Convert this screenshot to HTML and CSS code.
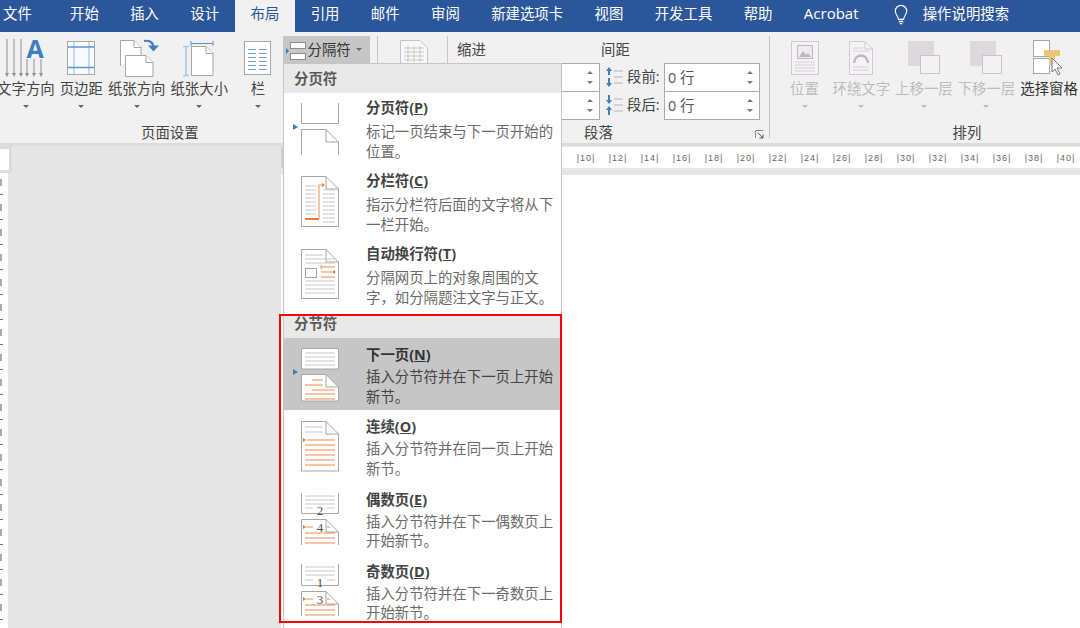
FILE: index.html
```html
<!DOCTYPE html>
<html lang="zh-CN">
<head>
    <meta charset="UTF-8">
    <title>布局 - 分隔符</title>
    <link rel="stylesheet" href="styles.css">
</head>
<body>

    <!-- Tabs -->
    <nav class="tabs">
        <a class="tab tab-file">文件</a>
        <a class="tab">开始</a>
        <a class="tab">插入</a>
        <a class="tab">设计</a>
        <a class="tab active">布局</a>
        <a class="tab">引用</a>
        <a class="tab">邮件</a>
        <a class="tab">审阅</a>
        <a class="tab">新建选项卡</a>
        <a class="tab">视图</a>
        <a class="tab">开发工具</a>
        <a class="tab">帮助</a>
        <a class="tab tab-acrobat">Acrobat</a>
        <svg class="bulb" width="14" height="21" viewBox="0 0 16 24">
            <path d="M5 17.5C5 14 1.5 12.500 1.500 8A6.500 6.500 0 0 1 14.500 8C14.500 12.500 11 14 11 17.500Z" fill="none" stroke="#fff" stroke-width="1.300"/>
            <path d="M5.500 20H10.500M6.500 22.500H9.500" stroke="#fff" stroke-width="1.500"/>
        </svg>
        <a class="tab tab-search">操作说明搜索</a>
    </nav>

    <!-- Ribbon -->
    <section class="ribbon">

        <div class="group group-page">
            <div class="group-body">
                <div class="btn">
                    <svg class="btn-icon" width="44" height="44" viewBox="0 0 44 44">
                        <path class="arrow-line" d="M3 3V39M10 3V39M17 3V39M23 23V39M30 23V39M37 23V39"/>
                        <path class="arrow-head" d="M1 37L3 41L5 37ZM8 37L10 41L12 37ZM15 37L17 41L19 37ZM21 37L23 41L25 37ZM28 37L30 41L32 37ZM35 37L37 41L39 37Z"/>
                        <text class="icon-a" x="31" y="22">A</text>
                    </svg>
                    <span class="btn-label">文字方向</span>
                    <i class="caret"></i>
                </div>
                <div class="btn btn-margin">
                    <svg class="btn-icon" width="44" height="44" viewBox="0 0 44 44">
                        <rect x="8.500" y="5.500" width="27" height="33" fill="#f7fbff" stroke="#a6a6a6"/>
                        <path d="M15 6V38M30 6V38" stroke="#b5cfe8" stroke-width="1.500"/>
                        <path d="M9 11H35M9 31.500H35" stroke="#5b93cf" stroke-width="1.500"/>
                    </svg>
                    <span class="btn-label">页边距</span>
                    <i class="caret"></i>
                </div>
                <div class="btn">
                    <svg class="btn-icon" width="44" height="44" viewBox="0 0 44 44">
                        <path class="page" d="M5.500 30V4.500H19L26 11.500V19"/>
                        <path class="page" d="M19 4.500V11.500H26"/>
                        <path class="page" d="M10.500 19.500H31L38 26.500V40.500H10.500Z"/>
                        <path class="page" d="M31 19.500V26.500H38"/>
                        <path d="M29 5C34 4 38 6 38.500 11" fill="none" stroke="#3f7fc1" stroke-width="2.200"/>
                        <path d="M33 9.500H44L38.500 15.500Z" fill="#3f7fc1"/>
                    </svg>
                    <span class="btn-label">纸张方向</span>
                    <i class="caret"></i>
                </div>
                <div class="btn">
                    <svg class="btn-icon" width="44" height="44" viewBox="0 0 44 44">
                        <path class="page" d="M14.500 10.500H29L36 17.500V39.500H14.500Z"/>
                        <path class="page" d="M29 10.500V17.500H36"/>
                        <path d="M14 7.500H36M14 5V10M36 5V10" stroke="#5b93cf" fill="none"/>
                        <path d="M9 11V39M6 10.500H12M6 39.500H12" stroke="#a9c6e4" stroke-width="1.500" fill="none"/>
                    </svg>
                    <span class="btn-label">纸张大小</span>
                    <i class="caret"></i>
                </div>
                <div class="btn btn-col">
                    <svg class="btn-icon" width="44" height="44" viewBox="0 0 44 44">
                        <rect x="8.500" y="5.500" width="26" height="33" fill="#fff" stroke="#a6a6a6"/>
                        <path d="M12 13.500H20M23 13.500H31M12 17.500H20M23 17.500H31M12 21.500H20M23 21.500H31M12 25.500H20M23 25.500H31M12 29.500H20M23 29.500H31M12 33.500H20M23 33.500H31" stroke="#6c9dd3"/>
                    </svg>
                    <span class="btn-label">栏</span>
                    <i class="caret"></i>
                </div>
                <div class="break-btn">
                    <svg width="20" height="20" viewBox="0 0 20 20">
                        <path d="M0 8L3 11L0 14Z" fill="#3f7fc1"/>
                        <rect x="4.500" y="2.500" width="15" height="6" fill="#fff" stroke="#8c8c8c"/>
                        <rect x="4.500" y="13.500" width="15" height="6" fill="#fff" stroke="#8c8c8c"/>
                    </svg>
                    <span>分隔符</span>
                    <i class="caret"></i>
                </div>
            </div>
            <div class="group-label">页面设置</div>
        </div>

        <div class="group group-draft">
            <svg width="28" height="40" viewBox="0 0 28 40">
                <path d="M.5 39V.5H20L27.500 8V39Z" fill="#f8f8f8" stroke="#b8c6d6"/>
                <path d="M4 8H24M4 12H24M4 16H24M4 20H24M8 6V22M14 6V22M20 6V22" stroke="#c9c9c9"/>
            </svg>
        </div>

        <div class="group group-para">
            <div class="para-grid">
                <div class="para-head">缩进</div>
                <div class="para-head">间距</div>
                <div class="para-cell">
                    <div class="spin spin-indent"><span class="spin-val"></span><span class="spin-arrows"><i></i><i></i></span></div>
                </div>
                <div class="para-cell">
                    <svg class="space-icon" width="20" height="24" viewBox="0 0 20 24">
                        <path d="M5 2L8 6H6V10H4V6H2ZM5 22L8 18H6V13H4V18H2Z" fill="#3f7fc1"/>
                        <path d="M10 6H19M10 12H19M10 18H19" stroke="#b5b5b5"/>
                    </svg>
                    <span class="spin-name">段前:</span>
                    <div class="spin"><span class="spin-val">0 行</span><span class="spin-arrows"><i></i><i></i></span></div>
                </div>
                <div class="para-cell">
                    <div class="spin spin-indent"><span class="spin-val"></span><span class="spin-arrows"><i></i><i></i></span></div>
                </div>
                <div class="para-cell">
                    <svg class="space-icon" width="20" height="24" viewBox="0 0 20 24">
                        <path d="M5 11L8 7H6V2H4V7H2ZM5 13L8 17H6V22H4V17H2Z" fill="#3f7fc1"/>
                        <path d="M10 6H19M10 12H19M10 18H19" stroke="#b5b5b5"/>
                    </svg>
                    <span class="spin-name">段后:</span>
                    <div class="spin"><span class="spin-val">0 行</span><span class="spin-arrows"><i></i><i></i></span></div>
                </div>
            </div>
            <div class="para-foot">
                <span>段落</span>
                <svg class="launcher" width="9" height="9" viewBox="0 0 9 9">
                    <path d="M.5 8V.5H8.500" fill="none" stroke="#8c8c8c"/>
                    <path d="M3 3L8 8M8 4.500V8H4.500" fill="none" stroke="#555"/>
                </svg>
            </div>
        </div>

        <div class="group group-arrange">
            <div class="group-body">
                <div class="btn btn-pos disabled">
                    <svg class="btn-icon" width="44" height="44" viewBox="0 0 44 44">
                        <rect x="8.500" y="5.500" width="27" height="33" fill="#f5f2f5" stroke="#cfcacf"/>
                        <rect x="14.500" y="9.500" width="15" height="13" fill="#eeeaee" stroke="#bdb8bd"/>
                        <path d="M16 21L20 15L23 19L25 17L28 21Z" fill="#bdb8bd"/>
                        <path d="M12 26H32M12 29H32M12 32H32M12 35H32" stroke="#d5d0d5"/>
                    </svg>
                    <span class="btn-label">位置</span>
                    <i class="caret"></i>
                </div>
                <div class="btn disabled">
                    <svg class="btn-icon" width="44" height="44" viewBox="0 0 44 44">
                        <path d="M10.500 38.500V5.500H26L33.500 13V38.500Z" fill="#f5f2f5" stroke="#cfcacf"/>
                        <path d="M26 5.500V13H33.500" fill="none" stroke="#cfcacf"/>
                        <path d="M14 12H24M14 15H30M14 31H30M14 34H30" stroke="#d5d0d5"/>
                        <path d="M15 27C16 17 28 17 29 27" fill="none" stroke="#bdb8bd" stroke-width="2.500"/>
                    </svg>
                    <span class="btn-label">环绕文字</span>
                    <i class="caret"></i>
                </div>
                <div class="btn disabled">
                    <svg class="btn-icon" width="44" height="44" viewBox="0 0 44 44">
                        <rect x="6" y="5" width="26" height="25" fill="#dcd8dc"/>
                        <rect x="18.500" y="19.500" width="19" height="18" fill="#f5f2f5" stroke="#c8c4c8"/>
                    </svg>
                    <span class="btn-label">上移一层</span>
                    <i class="caret"></i>
                </div>
                <div class="btn disabled">
                    <svg class="btn-icon" width="44" height="44" viewBox="0 0 44 44">
                        <rect x="6" y="5" width="26" height="25" fill="#dcd8dc"/>
                        <rect x="18.500" y="19.500" width="19" height="18" fill="#f5f2f5" stroke="#c8c4c8"/>
                    </svg>
                    <span class="btn-label">下移一层</span>
                    <i class="caret"></i>
                </div>
                <div class="btn">
                    <svg class="btn-icon" width="44" height="44" viewBox="0 0 44 44">
                        <rect x="6.500" y="4.500" width="16" height="16" fill="#fff" stroke="#a6a6a6"/>
                        <rect x="6.500" y="22.500" width="16" height="15" fill="#fff" stroke="#a6a6a6"/>
                        <path d="M17 14H33V20H28V29H22V20H17Z" fill="#efc678"/>
                        <path d="M25 22V36L28 33L31 39L33 38L30 32H35Z" fill="#fff" stroke="#777"/>
                    </svg>
                    <span class="btn-label label-dark">选择窗格</span>
                </div>
            </div>
            <div class="group-label">排列</div>
        </div>
    </section>

    <!-- Document area -->
    <main class="workspace">
        <div class="left-pane">
            <div class="corner"></div>
            <div class="v-ruler"></div>
        </div>
        <div class="right-pane">
            <div class="h-ruler">
                <span>|10|</span><span>|12|</span><span>|14|</span><span>|16|</span>
                <span>|18|</span><span>|20|</span><span>|22|</span><span>|24|</span>
                <span>|26|</span><span>|28|</span><span>|30|</span><span>|32|</span>
                <span>|34|</span><span>|36|</span><span>|38|</span><span>|40|</span>
            </div>
            <div class="sheet"></div>
        </div>
    </main>

    <!-- Breaks menu -->
    <div class="menu">
        <div class="menu-head">分页符</div>

        <div class="item">
            <svg class="item-icon" width="50" height="70" viewBox="0 0 50 70">
                <path d="M3 31L8 34L3 37Z" fill="#3f7fc1"/>
                <path class="outline" d="M11.500 10V30.500H48.500V10"/>
                <path class="outline" d="M11.500 62V36.500H36L48.500 49V62"/>
                <path class="outline" d="M36 36.500V49H48.500"/>
            </svg>
            <div class="item-text">
                <div class="item-title">分页符(<u>P</u>)</div>
                <div class="item-desc">标记一页结束与下一页开始的位置。</div>
            </div>
        </div>

        <div class="item">
            <svg class="item-icon" width="50" height="70" viewBox="0 0 50 70">
                <path class="outline" d="M11.500 60.500V10.500H36L48.500 23V60.500Z"/>
                <path class="outline" d="M36 10.500V23H48.500"/>
                <path class="gray" d="M15 20H26M15 24H26M15 28H26M15 32H26M15 36H26M15 40H26M15 44H26M15 48H26M33 24H45M33 28H45M33 32H45M33 36H45M33 40H45M33 44H45M33 48H45M33 52H45M33 56H45"/>
                <path class="orange" d="M29 53V19H32"/>
                <path d="M32 17L35 19L32 21Z" fill="#ed7d31"/>
                <path d="M15 53H29" stroke="#ed7d31" stroke-width="2"/>
            </svg>
            <div class="item-text">
                <div class="item-title">分栏符(<u>C</u>)</div>
                <div class="item-desc">指示分栏符后面的文字将从下一栏开始。</div>
            </div>
        </div>

        <div class="item">
            <svg class="item-icon" width="50" height="70" viewBox="0 0 50 70">
                <path class="outline" d="M11.500 59.500V10.500H36L48.500 23V59.500Z"/>
                <path class="outline" d="M36 10.500V23H48.500"/>
                <path class="gray" d="M15 16H33M15 20H45M15 24H45M15 42H45M15 46H45M15 50H45M15 54H45"/>
                <rect x="15.500" y="29.500" width="11" height="9" fill="#fff" stroke="#a6a6a6"/>
                <path class="orange" d="M31 28H45M31 33H42M31 38H45M31 26V30"/>
                <path d="M45 31L42 33L45 35Z" fill="#ed7d31"/>
            </svg>
            <div class="item-text">
                <div class="item-title">自动换行符(<u>T</u>)</div>
                <div class="item-desc">分隔网页上的对象周围的文字，如分隔题注文字与正文。</div>
            </div>
        </div>

        <div class="menu-head menu-head-second">分节符</div>

        <div class="item item-low selected">
            <svg class="item-icon" width="50" height="70" viewBox="0 0 50 70">
                <path d="M3 31L8 34L3 37Z" fill="#3f7fc1"/>
                <path class="outline sheet-fill" d="M11.500 10.500H48.500V31H11.500Z"/>
                <path class="gray" d="M15 15H45M15 19H45M15 23H45M15 27H45"/>
                <path class="outline sheet-fill" d="M11.500 63V36.500H36L48.500 49V63Z"/>
                <path class="outline" d="M36 36.500V49H48.500"/>
                <path class="orange" d="M22 42H33M15 47H33M22 52H45M15 56H45M15 61H45"/>
            </svg>
            <div class="item-text">
                <div class="item-title">下一页(<u>N</u>)</div>
                <div class="item-desc">插入分节符并在下一页上开始新节。</div>
            </div>
        </div>

        <div class="item item-low">
            <svg class="item-icon" width="50" height="70" viewBox="0 0 50 70">
                <path class="outline" d="M11.500 61V11.500H36L48.500 24V61Z"/>
                <path class="outline" d="M36 11.500V24H48.500"/>
                <path class="gray" d="M15 17H33M15 22H33"/>
                <path d="M13 28L16 30L13 32Z" fill="#ed7d31"/>
                <path class="orange" d="M17 30H45M15 35H45M15 40H45M15 45H45M15 50H45M15 55H45"/>
            </svg>
            <div class="item-text">
                <div class="item-title">连续(<u>O</u>)</div>
                <div class="item-desc">插入分节符并在同一页上开始新节。</div>
            </div>
        </div>

        <div class="item item-low">
            <svg class="item-icon" width="50" height="70" viewBox="0 0 50 70">
                <path class="outline" d="M11.500 10V30.500H48.500V10"/>
                <path class="gray" d="M15 13H45M15 17H45M15 21H45M15 25H23M37 25H45"/>
                <text class="page-num" x="30" y="32">2</text>
                <path class="outline" d="M11.500 62V36.500H36L48.500 49V62"/>
                <path class="outline" d="M36 36.500V49H48.500"/>
                <path d="M13 42L16 44L13 46Z" fill="#ed7d31"/>
                <path class="orange" d="M16 44H23M37 44H40M15 50H45M15 55H45M15 60H45"/>
                <text class="page-num" x="30" y="49">4</text>
            </svg>
            <div class="item-text">
                <div class="item-title">偶数页(<u>E</u>)</div>
                <div class="item-desc">插入分节符并在下一偶数页上开始新节。</div>
            </div>
        </div>

        <div class="item item-low">
            <svg class="item-icon" width="50" height="70" viewBox="0 0 50 70">
                <path class="outline" d="M11.500 9V30.500H48.500V9"/>
                <path class="gray" d="M15 12H45M15 16H45M15 20H45M15 25H23M37 25H45"/>
                <text class="page-num" x="30" y="32">1</text>
                <path class="outline" d="M11.500 61V36.500H36L48.500 49V61"/>
                <path class="outline" d="M36 36.500V49H48.500"/>
                <path d="M13 42L16 44L13 46Z" fill="#ed7d31"/>
                <path class="orange" d="M16 44H23M37 44H40M15 50H45M15 55H45M15 60H45"/>
                <text class="page-num" x="30" y="49">3</text>
            </svg>
            <div class="item-text">
                <div class="item-title">奇数页(<u>D</u>)</div>
                <div class="item-desc">插入分节符并在下一奇数页上开始新节。</div>
            </div>
        </div>
    </div>

    <!-- Red annotation box -->
    <div class="annotation"></div>

</body>
</html>
```

FILE: styles.css
```css
/* Global Reset */
* {
    margin: 0;
    padding: 0;
    box-sizing: border-box;
}

html, body {
    height: 628px;
    overflow: hidden;
}

body {
    position: relative;
    display: flex;
    flex-direction: column;
    font-family: "Open Sans", "Noto Sans CJK SC", sans-serif;
    font-size: 14.4px;
    color: #444;
    background-color: #e6e6e6;
}

/* Tabs */
.tabs {
    display: flex;
    align-items: center;
    flex: none;
    height: 32px;
    background-color: #2b579a;
}

.tab {
    padding: 0 15.7px;
    height: 32px;
    line-height: 27px;
    color: #fff;
    white-space: nowrap;
}

.tab-file {
    padding: 0 22.5px 0 3px;
}

.tab.active {
    color: #2b579a;
    background-color: #f1f1f1;
}

.tab-acrobat {
    font-size: 15px;
}

.bulb {
    flex: none;
    margin-left: 20px;
    margin-top: -4px;
}

.tab-search {
    padding-left: 14.5px;
}

/* Ribbon */
.ribbon {
    display: flex;
    flex: none;
    height: 111px;
    padding: 4px 0 5px;
    overflow: hidden;
    background-color: #f1f1f1;
}

.group {
    flex: none;
    height: 102px;
    border-right: 1px solid #c6c6c6;
}

.group-page {
    width: 401px;
    margin-left: -23px;
    padding-left: 17.6px;
}

.group-draft {
    width: 70px;
    padding: 4px 0 0 22px;
}

.group-para {
    width: 322px;
    padding-left: 9px;
}

.group-arrange {
    width: 394px;
    padding-left: 9px;
    border-right: none;
}

.group-body {
    display: flex;
    align-items: flex-start;
    height: 83px;
}

.group-label {
    margin-top: 7px;
    height: 14px;
    line-height: 14px;
    text-align: center;
    color: #444;
    white-space: nowrap;
}

.group-page .group-label {
    padding-right: 32px;
}

.group-arrange .group-label {
    margin-left: -9px;
}

.btn {
    display: flex;
    flex-direction: column;
    align-items: center;
    flex: none;
    width: 62.600px;
}

.btn-margin {
    width: 48.200px;
}

.btn-col {
    width: 55px;
}

.btn-pos {
    width: 51px;
}

.btn-icon {
    display: block;
    overflow: visible;
}

.btn-label {
    height: 18px;
    line-height: 18px;
    white-space: nowrap;
    color: #444;
}

.label-dark {
    color: #333;
}

.disabled .btn-label {
    color: #bcbcbc;
}

.caret {
    display: block;
    margin-top: 7px;
    width: 0;
    height: 0;
    border-left: 3px solid transparent;
    border-right: 3px solid transparent;
    border-top: 3px solid #666;
}

.disabled .caret {
    border-top-color: #bcbcbc;
}

.break-btn {
    display: flex;
    align-items: center;
    flex: none;
    margin-left: -3px;
    width: 87px;
    height: 27px;
    padding-left: 3px;
    background-color: #c6c6c6;
}

.break-btn span {
    margin-left: 2px;
    line-height: 27px;
    color: #333;
}

.break-btn .caret {
    margin: 0 0 0 5px;
}

.arrow-line {
    stroke: #8f8f8f;
    fill: none;
}

.arrow-head {
    fill: #8f8f8f;
}

.icon-a {
    font-family: "Open Sans", sans-serif;
    font-size: 25px;
    font-weight: 700;
    text-anchor: middle;
    fill: #3f7fc1;
}

.page {
    fill: #fff;
    stroke: #a6a6a6;
}

/* Paragraph group */
.para-grid {
    display: grid;
    grid-template-columns: 144px 160px;
    grid-template-rows: 27px 28px 28px;
    height: 83px;
}

.para-head {
    line-height: 27px;
    color: #444;
}

.para-cell {
    display: flex;
    align-items: center;
}

.space-icon {
    flex: none;
    margin-left: 3px;
}

.spin-name {
    margin-left: 3px;
    width: 37px;
    line-height: 20px;
    white-space: nowrap;
    color: #444;
}

.spin {
    display: flex;
    flex: none;
    width: 96px;
    height: 29px;
    margin-bottom: -1px;
    background-color: #fff;
    border: 1px solid #ababab;
}

.spin-indent {
    width: 143px;
}

.spin-val {
    flex: 1;
    padding-left: 3px;
    line-height: 27px;
    color: #555;
}

.spin-arrows {
    display: flex;
    flex-direction: column;
    justify-content: space-around;
    align-items: center;
    width: 19px;
    padding: 4px 0;
}

.spin-arrows i {
    width: 0;
    height: 0;
    border-left: 3px solid transparent;
    border-right: 3px solid transparent;
    border-bottom: 3px solid #777;
}

.spin-arrows i:last-child {
    border-bottom: none;
    border-top: 3px solid #777;
}

.para-foot {
    display: flex;
    align-items: center;
    margin-top: 7px;
    height: 14px;
    padding-left: 127px;
    line-height: 14px;
}

.launcher {
    margin-left: auto;
    margin-right: 5px;
    margin-top: 2px;
}

/* Document area */
.workspace {
    display: flex;
    flex: 1;
    min-height: 0;
    background-color: #e6e6e6;
    border-top: 3px solid #dcdcdc;
}

.left-pane {
    display: flex;
    flex-direction: column;
    flex: none;
    width: 281px;
}

.corner {
    flex: none;
    width: 12px;
    height: 27px;
    background-color: #fff;
    border: 3px solid #dcdcdc;
    border-left: none;
}

.v-ruler {
    flex: 1;
    width: 8px;
    background-color: #fff;
    background-image:
        linear-gradient(#777 0 1px, transparent 1px),
        linear-gradient(#aaa 0 7px, transparent 7px);
    background-size: 3px 25px, 2px 25px;
    background-position: 0 21px, 0 6px;
    background-repeat: repeat-y;
}

.right-pane {
    display: flex;
    flex-direction: column;
    flex: 1;
    padding-top: 1px;
}

.h-ruler {
    display: flex;
    align-items: center;
    flex: none;
    height: 21px;
    padding-left: 287px;
    background-color: #fff;
    border-left: 2px solid #cfcfcf;
}

.h-ruler span {
    flex: none;
    width: 32px;
    text-align: center;
    font-family: "Liberation Sans", sans-serif;
    font-size: 9px;
    letter-spacing: 1px;
    color: #666;
}

.sheet {
    flex: 1;
    margin-top: 7px;
    background-color: #fff;
}

/* Breaks menu */
.menu {
    position: absolute;
    left: 283px;
    top: 63px;
    width: 279px;
    height: 565px;
    overflow: hidden;
    background-color: #fff;
    border: 1px solid #c6c6c6;
    border-bottom: none;
}

.menu-head {
    height: 29px;
    padding-left: 10px;
    line-height: 29px;
    font-weight: 700;
    color: #5a5a5a;
    background-color: #e9e9e9;
}

.menu-head-second {
    margin-top: 2px;
    height: 24px;
    line-height: 19px;
}

.item {
    display: flex;
    align-items: flex-start;
    height: 73px;
    padding-top: 4px;
    overflow: hidden;
}

.item-low {
    height: 72.300px;
    padding-top: 6px;
}

.item.selected {
    background-color: #c6c6c6;
}

.item-icon {
    flex: none;
    margin: -4px 26px 0 6px;
}

.item-low .item-icon {
    margin-top: -6px;
}

.item-text {
    width: 190px;
}

.item-title {
    height: 22px;
    line-height: 22px;
    font-weight: 700;
    color: #444;
    white-space: nowrap;
}

.item-desc {
    margin-top: 3px;
    line-height: 19.6px;
    color: #6a6a6a;
}

.item-low .item-desc {
    margin-top: 1px;
}

.selected .item-title {
    color: #333;
}

.selected .item-desc {
    color: #444;
}

.outline {
    fill: none;
    stroke: #a6a6a6;
}

.sheet-fill {
    fill: #fff;
}

.gray {
    stroke: #c8c8c8;
    fill: none;
}

.orange {
    stroke: #ee8a4c;
    fill: none;
}

.page-num {
    font-family: "Liberation Serif", serif;
    font-size: 13px;
    text-anchor: middle;
    fill: #555;
}

/* Red annotation */
.annotation {
    position: absolute;
    left: 279px;
    top: 314px;
    width: 283px;
    height: 309px;
    border: 2px solid #f00;
}
```
